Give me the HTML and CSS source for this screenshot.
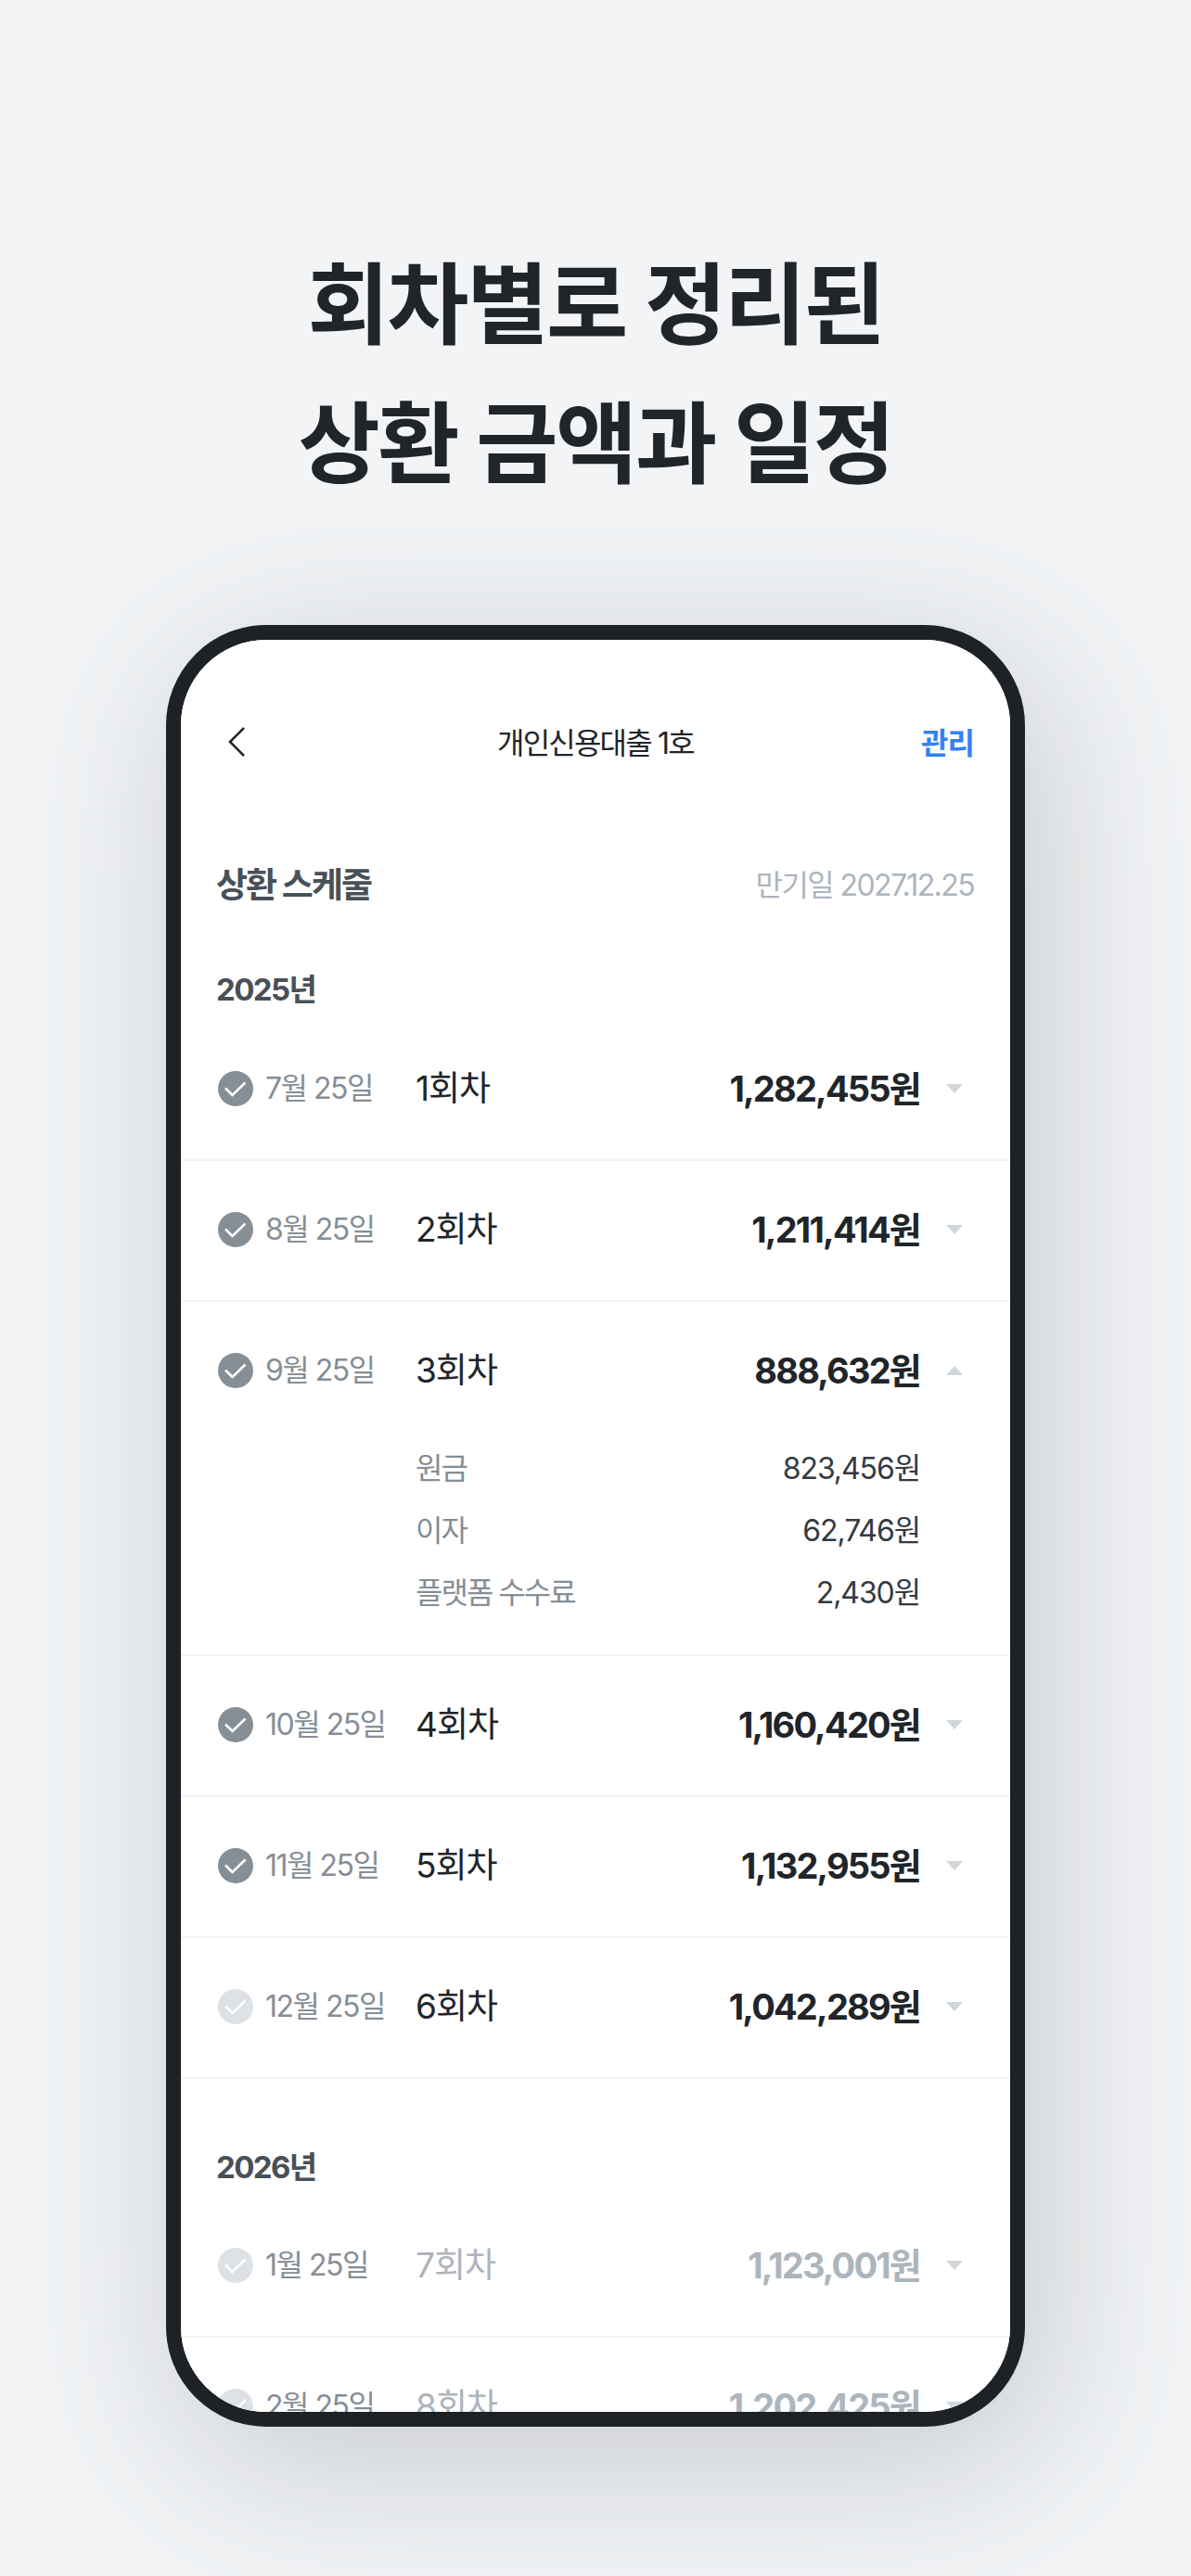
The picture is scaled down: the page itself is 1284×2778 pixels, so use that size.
FILE: index.html
```html
<!DOCTYPE html>
<html lang="ko">
<head>
  <meta charset="UTF-8" />
  <meta name="viewport" content="width=device-width, initial-scale=1.0" />
  <title>상환 스케줄</title>
  <link rel="stylesheet" href="styles.css">
</head>
<body>
  <svg class="defs" width="0" height="0">
    <symbol id="check" viewBox="0 0 38 38">
      <circle cx="19" cy="19" r="19" fill="currentColor" />
      <path d="M8 18.5 L15.5 26 L29.5 12.5" fill="none" stroke="#fff" stroke-width="2.6" />
    </symbol>
    <symbol id="down" viewBox="0 0 18 10"><path d="M0 0 H18 L9 10 Z" fill="#d1d6db" /></symbol>
    <symbol id="up" viewBox="0 0 18 10"><path d="M0 10 H18 L9 0 Z" fill="#d1d6db" /></symbol>
  </svg>

  <h1 class="headline">회차별로 정리된<br />상환 금액과 일정</h1>

  <div class="phone">
    <div class="screen">
      <div class="nav">
        <svg class="back" width="20" height="32" viewBox="0 0 20 32"><path d="M18 1 L3 16 L18 31" fill="none" stroke="#212529" stroke-width="2.6" /></svg>
        <span class="nav-title">개인신용대출 1호</span>
        <span class="nav-action">관리</span>
      </div>

      <div class="section-head">
        <span class="section-title">상환 스케줄</span>
        <span class="section-date">만기일 2027.12.25</span>
      </div>

      <div class="year year-first">2025년</div>

      <div class="row">
        <svg class="check"><use href="#check" /></svg>
        <span class="date">7월 25일</span>
        <span class="round">1회차</span>
        <span class="amount">1,282,455원</span>
        <svg class="arrow"><use href="#down" /></svg>
      </div>
      <div class="row">
        <svg class="check"><use href="#check" /></svg>
        <span class="date">8월 25일</span>
        <span class="round">2회차</span>
        <span class="amount">1,211,414원</span>
        <svg class="arrow"><use href="#down" /></svg>
      </div>
      <div class="expanded">
        <div class="row row-open">
          <svg class="check"><use href="#check" /></svg>
          <span class="date">9월 25일</span>
          <span class="round">3회차</span>
          <span class="amount">888,632원</span>
          <svg class="arrow"><use href="#up" /></svg>
        </div>
        <div class="detail"><span class="detail-label">원금</span><span class="detail-value">823,456원</span></div>
        <div class="detail"><span class="detail-label">이자</span><span class="detail-value">62,746원</span></div>
        <div class="detail"><span class="detail-label">플랫폼 수수료</span><span class="detail-value">2,430원</span></div>
      </div>
      <div class="row">
        <svg class="check"><use href="#check" /></svg>
        <span class="date">10월 25일</span>
        <span class="round">4회차</span>
        <span class="amount">1,160,420원</span>
        <svg class="arrow"><use href="#down" /></svg>
      </div>
      <div class="row">
        <svg class="check"><use href="#check" /></svg>
        <span class="date">11월 25일</span>
        <span class="round">5회차</span>
        <span class="amount">1,132,955원</span>
        <svg class="arrow"><use href="#down" /></svg>
      </div>
      <div class="row row-pending">
        <svg class="check"><use href="#check" /></svg>
        <span class="date">12월 25일</span>
        <span class="round">6회차</span>
        <span class="amount">1,042,289원</span>
        <svg class="arrow"><use href="#down" /></svg>
      </div>

      <div class="year">2026년</div>

      <div class="row row-pending row-future">
        <svg class="check"><use href="#check" /></svg>
        <span class="date">1월 25일</span>
        <span class="round">7회차</span>
        <span class="amount">1,123,001원</span>
        <svg class="arrow"><use href="#down" /></svg>
      </div>
      <div class="row row-pending row-future">
        <svg class="check"><use href="#check" /></svg>
        <span class="date">2월 25일</span>
        <span class="round">8회차</span>
        <span class="amount">1,202,425원</span>
        <svg class="arrow"><use href="#down" /></svg>
      </div>
    </div>
  </div>
</body>
</html>
```

FILE: styles.css
```css
html, body {
  margin: 0;
  padding: 0;
}

body {
  width: 1284px;
  height: 2778px;
  overflow: hidden;
  background: #f2f4f6;
  color: #212529;
  font-family: Inter, 'Noto Sans CJK KR', sans-serif;
}

.defs {
  position: absolute;
}

.headline {
  margin: 0;
  padding-top: 253px;
  font-size: 96px;
  line-height: 150px;
  font-weight: 700;
  letter-spacing: -2.5px;
  text-align: center;
  color: #212529;
}

.phone {
  box-sizing: border-box;
  width: 926px;
  height: 1943px;
  margin: 121px 0 0 179px;
  border: 16px solid #1e2226;
  border-radius: 108px;
  background: #fff;
  box-shadow: 20px 40px 180px rgba(73, 80, 87, 0.25);
}

.screen {
  height: 100%;
  overflow: hidden;
  border-radius: 92px;
  background: #fff;
}

.nav {
  position: relative;
  height: 220px;
  display: flex;
  align-items: center;
  justify-content: center;
}

.back {
  position: absolute;
  left: 50px;
  top: 94px;
}

.nav-title {
  margin-bottom: 2px;
  font-size: 32px;
  letter-spacing: -1.8px;
}

.nav-action {
  position: absolute;
  right: 39px;
  margin-bottom: 2px;
  font-size: 32px;
  font-weight: 700;
  letter-spacing: -1px;
  color: #3182f6;
}

.section-head {
  height: 86px;
  padding: 0 39px 0 38px;
  display: flex;
  align-items: center;
  justify-content: space-between;
}

.section-title {
  margin-bottom: 3px;
  font-size: 37px;
  font-weight: 700;
  letter-spacing: -2px;
  color: #495057;
}

.section-date {
  margin-bottom: 3px;
  font-size: 32px;
  letter-spacing: -1.6px;
  color: #adb5bd;
}

.year {
  padding: 70px 38px 7px;
  font-size: 33px;
  line-height: 50px;
  font-weight: 700;
  letter-spacing: -1.6px;
  color: #495057;
}

.year-first {
  padding-top: 46px;
  padding-bottom: 8px;
}

.row {
  box-sizing: border-box;
  height: 152px;
  padding: 0 51px 2px 40px;
  display: flex;
  align-items: center;
  border-bottom: 2px solid #f1f3f5;
}

.check {
  flex: none;
  width: 38px;
  height: 38px;
  color: #868e96;
}

.date {
  flex: none;
  width: 162px;
  margin-left: 13px;
  margin-bottom: 6px;
  font-size: 32px;
  letter-spacing: -1.5px;
  color: #868e96;
}

.round {
  margin-bottom: 6px;
  font-size: 37px;
  letter-spacing: -1px;
}

.amount {
  margin-left: auto;
  margin-bottom: 6px;
  font-size: 38px;
  font-weight: 700;
  letter-spacing: -1.8px;
}

.arrow {
  flex: none;
  width: 18px;
  height: 10px;
  margin-left: 28px;
}

.row-pending .check {
  color: #dee2e6;
}

.row-future .round,
.row-future .amount {
  color: #adb5bd;
}

.expanded {
  padding-bottom: 33px;
  border-bottom: 2px solid #f1f3f5;
}

.row-open {
  height: 146px;
  padding-top: 2px;
  padding-bottom: 0;
  border-bottom: none;
}

.detail {
  height: 67px;
  padding: 0 97px 6px 253px;
  box-sizing: border-box;
  display: flex;
  align-items: center;
  justify-content: space-between;
  font-size: 32px;
}

.detail-label {
  letter-spacing: -2px;
  color: #868e96;
}

.detail-value {
  letter-spacing: -1.1px;
  color: #343a40;
}
```
